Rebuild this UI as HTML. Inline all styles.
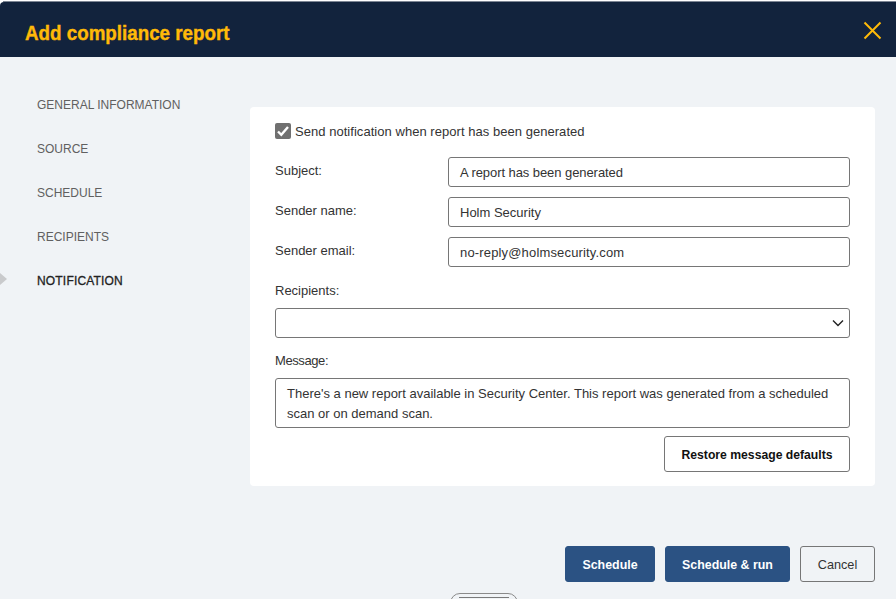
<!DOCTYPE html>
<html>
<head>
<meta charset="utf-8">
<style>
html,body{margin:0;padding:0;}
body{width:896px;height:599px;overflow:hidden;background:#fff;position:relative;font-family:"Liberation Sans",sans-serif;}
.abs{position:absolute;}
#dlg{position:absolute;left:0;top:2px;width:900px;height:620px;background:#f0f3f6;border-radius:4px 4px 0 0;overflow:hidden;}
#topline{position:absolute;left:3px;top:1px;width:893px;height:1px;background:rgba(18,35,61,0.55);}
#hdr{position:absolute;left:0;top:0;width:900px;height:55px;background:#12233d;}
#title{position:absolute;left:25px;top:16px;font-size:20.5px;line-height:30px;font-weight:bold;color:#ffba08;-webkit-text-stroke:0.4px #ffba08;white-space:nowrap;transform-origin:0 0;transform:scaleX(0.916);}
#close{position:absolute;left:863px;top:19px;width:19px;height:19px;}
.nav{position:absolute;left:37px;font-size:12px;line-height:16px;color:#606060;white-space:nowrap;}
.nav.active{color:#222;-webkit-text-stroke:0.3px #222;letter-spacing:0.18px;}
#arrow{position:absolute;left:0;top:273px;width:0;height:0;border-top:6.5px solid transparent;border-bottom:6.5px solid transparent;border-left:7px solid #c9cacc;}
#card{position:absolute;left:250px;top:107px;width:625px;height:379px;background:#fff;border-radius:4px;}
.lbl{position:absolute;left:275px;font-size:13px;line-height:20px;color:#333;white-space:nowrap;}
.inp{position:absolute;left:448px;width:400px;height:28px;border:1px solid #767676;border-radius:3px;background:#fff;}
.inp span{position:absolute;left:11px;top:5px;font-size:13px;line-height:20px;color:#333;white-space:nowrap;}
#chk{position:absolute;left:275px;top:123px;width:16px;height:16px;background:#707070;border-radius:2px;}
#sel{position:absolute;left:275px;top:308px;width:573px;height:28px;border:1px solid #767676;border-radius:3px;background:#fff;}
#ta{position:absolute;left:275px;top:378px;width:573px;height:48px;border:1px solid #767676;border-radius:3px;background:#fff;}
#ta div{position:absolute;left:11px;top:5px;font-size:13px;line-height:20px;color:#333;width:560px;}
.btn{position:absolute;height:36px;box-sizing:border-box;border-radius:3px;font-size:12.4px;line-height:34px;padding-top:1px;text-align:center;white-space:nowrap;}
.prim{background:#2b5283;color:#fff;font-weight:bold;border:1px solid #2b5283;}
.sec{background:transparent;color:#333;border:1px solid #767676;font-size:12.7px;}
#restore{left:664px;top:436px;width:186px;background:#fff;color:#111;font-weight:bold;font-size:12.2px;border:1px solid #767676;}
#pill{position:absolute;left:450px;top:593px;width:66px;height:20px;border:1.5px solid #8a8a8a;border-radius:10px;}
#pillline{position:absolute;left:459px;top:597px;width:50px;height:1px;background:#7a7a7a;}
</style>
</head>
<body>
<div id="topline"></div>
<div id="dlg">
  <div id="hdr">
    <div id="title">Add compliance report</div>
    <svg id="close" viewBox="0 0 19 19"><path d="M1.5 1.5L17.5 17.5M17.5 1.5L1.5 17.5" stroke="#ffba08" stroke-width="2" fill="none"/></svg>
  </div>
</div>
<div class="nav" style="top:97px">GENERAL INFORMATION</div>
<div class="nav" style="top:141px">SOURCE</div>
<div class="nav" style="top:185px">SCHEDULE</div>
<div class="nav" style="top:229px">RECIPIENTS</div>
<div class="nav active" style="top:273px">NOTIFICATION</div>
<div id="arrow"></div>

<div id="card"></div>
<div id="chk"><svg width="16" height="16" viewBox="0 0 16 16"><path d="M3 8.5L6.3 11.8L13 4" stroke="#fff" stroke-width="2.4" fill="none"/></svg></div>
<div class="lbl" style="left:295px;top:122px;letter-spacing:0.04px">Send notification when report has been generated</div>

<div class="lbl" style="top:161px">Subject:</div>
<div class="inp" style="top:157px"><span style="letter-spacing:-0.07px">A report has been generated</span></div>
<div class="lbl" style="top:201px">Sender name:</div>
<div class="inp" style="top:197px"><span>Holm Security</span></div>
<div class="lbl" style="top:241px">Sender email:</div>
<div class="inp" style="top:237px"><span style="letter-spacing:0.16px">no-reply@holmsecurity.com</span></div>

<div class="lbl" style="top:281px">Recipients:</div>
<div id="sel"><svg style="position:absolute;left:556px;top:10px" width="12" height="8" viewBox="0 0 12 8"><path d="M1 1.5L6 6.5L11 1.5" stroke="#222" stroke-width="1.4" fill="none"/></svg></div>

<div class="lbl" style="top:351px;letter-spacing:-0.4px">Message:</div>
<div id="ta"><div>There's a new report available in Security Center. This report was generated from a scheduled scan or on demand scan.</div></div>

<div class="btn" id="restore">Restore message defaults</div>

<div class="btn prim" style="left:565px;top:546px;width:90px;">Schedule</div>
<div class="btn prim" style="left:665px;top:546px;width:125px;">Schedule &amp; run</div>
<div class="btn sec" style="left:800px;top:546px;width:75px;">Cancel</div>

<div id="pill"></div>
<div id="pillline"></div>
</body>
</html>
